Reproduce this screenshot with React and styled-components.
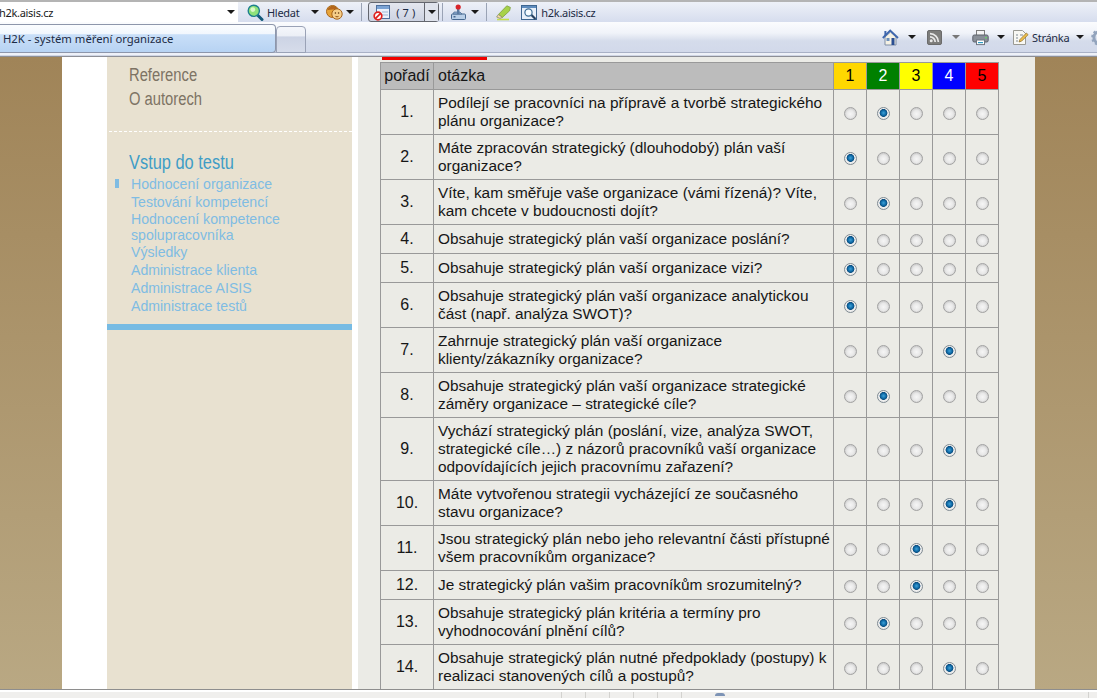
import React from "react";
import styled, { createGlobalStyle } from "styled-components";

const Global = createGlobalStyle`
  html, body { margin: 0; padding: 0; height: 100%; overflow: hidden; background: #fff; }
  #root { height: 100%; }
  * { box-sizing: border-box; }
`;

const Chrome = styled.div`
  width: 1097px;
  height: 698px;
  display: flex;
  flex-direction: column;
  overflow: hidden;
  font-family: "Liberation Sans", Arial, sans-serif;
`;

/* ---------- browser toolbar ---------- */
const CommandBar = styled.div`
  flex: 0 0 22px;
  display: flex;
  align-items: center;
  border-top: 2px solid #b4b4b4;
  background: linear-gradient(#eef1f8, #d6ddee);
  font: 11px "Noto Sans", Tahoma, sans-serif;
  letter-spacing: -0.3px;
  color: #1c2b45;
  white-space: nowrap;
`;
const AddressBox = styled.div`
  width: 238px;
  height: 20px;
  flex: none;
  display: flex;
  align-items: center;
  justify-content: space-between;
  padding: 0 3px 0 0;
  background: #fff;
  overflow: hidden;
  color: #1a1a1a;
`;
const AddressText = styled.span`
  margin-left: -1px;
`;
const Tool = styled.span`
  display: inline-flex;
  align-items: center;
  flex: none;
  margin-left: ${(p) => p.$ml || 0}px;
`;
const Caret = styled.span`
  flex: none;
  width: 0;
  height: 0;
  margin-left: ${(p) => p.$ml || 0}px;
  border-left: 4px solid transparent;
  border-right: 4px solid transparent;
  border-top: 4px solid ${(p) => (p.$muted ? "#777" : "#1a1a1a")};
`;
const Sep = styled.span`
  flex: none;
  width: 1px;
  height: 18px;
  background: #9aa3b5;
  margin-left: ${(p) => p.$ml || 0}px;
`;
const BlockerButton = styled.span`
  flex: none;
  width: 71px;
  height: 20px;
  margin-left: 6px;
  display: flex;
  align-items: center;
  border: 1px solid #63666e;
  border-radius: 3px;
  background: linear-gradient(#e4e7ef, #cdd3e2);
`;
const BlockerMain = styled.span`
  display: flex;
  align-items: center;
  flex: 1;
  height: 100%;
  padding-left: 4px;
  gap: 6px;
  letter-spacing: 3px;
`;
const BlockerSplit = styled.span`
  width: 14px;
  height: 100%;
  display: flex;
  align-items: center;
  justify-content: center;
  border-left: 1px solid #63666e;
  background: #dfe3ec;
`;

/* ---------- tab row ---------- */
const TabRow = styled.div`
  flex: 0 0 35px;
  display: flex;
  align-items: flex-end;
  background: linear-gradient(
    #fbfcfe 0,
    #f0f3f9 11px,
    #d5dceb 19px,
    #d2d9ea 30px,
    #a9b1c6 30px,
    #a9b1c6 31px,
    #eef1f8 31px,
    #eef1f8 33px,
    #cfd5e4 33px,
    #cfd5e4 34px,
    #8d8f96 34px
  );
  font: 11px "Noto Sans", Tahoma, sans-serif;
  letter-spacing: -0.3px;
  color: #1c2b45;
  white-space: nowrap;
  position: relative;
  padding-bottom: 4px;
`;
const ActiveTab = styled.div`
  width: 277px;
  height: 29px;
  flex: none;
  margin-left: -1px;
  padding: 2px 0 0 4px;
  font-size: 11.3px;
  letter-spacing: 0;
  line-height: 24px;
  border: 1px solid #8d96ab;
  border-left: 0;
  border-radius: 0 4px 4px 0;
  background: linear-gradient(#fbfdff 0, #f2f7fd 32%, #c9dff8 36%, #b7d3f3 100%);
`;
const EmptyTab = styled.div`
  width: 30px;
  height: 27px;
  flex: none;
  border: 1px solid #9aa2b6;
  border-radius: 4px 4px 0 0;
  background: linear-gradient(#f5f7fb 0, #eceff6 35%, #ccd3e4 40%, #d6dcea 100%);
`;
const PageTools = styled.div`
  position: absolute;
  left: 882px;
  top: 4px;
  width: 215px;
  height: 22px;
  display: flex;
  align-items: center;
  overflow: hidden;
`;

/* ---------- web page ---------- */
const Viewport = styled.div`
  flex: 1;
  min-height: 0;
  display: flex;
  justify-content: center;
  overflow: hidden;
  background: linear-gradient(#a08458, #b9a883);
`;
const Sheet = styled.div`
  width: 973px;
  flex: none;
  display: flex;
  background: #fff;
  padding-left: 45px;
`;
const Sidebar = styled.aside`
  width: 245px;
  flex: none;
  padding-top: 6px;
  background: #e8e1d0;
`;
const TopLink = styled.div`
  padding-left: 22px;
  height: 24px;
  font-size: 18px;
  line-height: 24px;
  color: #7d7364;
`;
const Condensed = styled.span`
  display: inline-block;
  transform: scaleX(0.82);
  transform-origin: left center;
  white-space: nowrap;
`;
const Dashed = styled.div`
  margin: 20px 0 18px 2px;
  border-top: 1px dashed #fff;
`;
const SideTitle = styled.h2`
  margin: 0 0 1px;
  padding-left: 22px;
  font-size: 20px;
  font-weight: 400;
  line-height: 24px;
  color: #3f9dc6;
`;
const Menu = styled.ul`
  list-style: none;
  margin: 0;
  padding: 0 60px 0 24px;
`;
const MenuItem = styled.li`
  position: relative;
  display: flex;
  align-items: center;
  min-height: 18px;
  font-size: 14.1px;
  line-height: 16px;
  color: #7fbce3;
  ${(p) =>
    p.$current &&
    `&::before {
      content: "";
      position: absolute;
      left: -16px;
      top: 4px;
      width: 4px;
      height: 9px;
      background: #7fbce3;
    }`}
`;
const SideRule = styled.div`
  height: 6px;
  margin-top: 9px;
  background: #77bbe3;
`;
const Main = styled.main`
  width: 677px;
  flex: none;
  margin-left: 6px;
  padding: 0 0 0 22px;
  background: #ebebe6;
`;
const TabMarker = styled.div`
  width: 105px;
  height: 3px;
  margin-left: 2px;
  background: #f00000;
`;
const Table = styled.table`
  width: 619px;
  margin-top: 2px;
  table-layout: fixed;
  border-collapse: collapse;
  font-size: 15.4px;
  line-height: 18px;
  color: #161616;
  & td, & th {
    border: 1px solid #999;
    padding: 0;
  }
`;
const HeadRow = styled.tr`
  height: 27px;
`;
const HeadCell = styled.th`
  background: #bcbcbc;
  font-size: 16px;
  font-weight: 400;
  text-align: ${(p) => (p.$left ? "left" : "center")};
  padding-left: ${(p) => (p.$left ? 4 : 0)}px !important;
`;
const ScoreHead = styled.th`
  background: ${(p) => p.$bg};
  color: ${(p) => p.$fg};
  font-size: 16px;
  font-weight: 400;
`;
const Row = styled.tr`
  height: ${(p) => p.$h}px;
`;
const OrderCell = styled.td`
  text-align: center;
  font-size: 16px;
`;
const Question = styled.td`
  padding: 0 1px 0 4px !important;
`;
const RadioCell = styled.td`
  text-align: center;
  line-height: 0;
`;
const Radio = styled.input.attrs({ type: "radio" })`
  appearance: none;
  width: 13px;
  height: 13px;
  margin: 3px 0 0;
  border-radius: 50%;
  border: 1px solid #a3a3a3;
  background: radial-gradient(circle at 50% 55%, #f6f6f6 0, #e8e8e8 45%, #cfcfcf 70%, #f2f2f2 100%);
  &:checked {
    border-color: #7f8a92;
    background: radial-gradient(circle at 50% 45%, #3fa2d8 0, #0f6ba8 30%, #0d4f80 44%, #f0f0f0 52%, #e2e2e2 100%);
  }
`;

/* ---------- status bar ---------- */
const StatusBar = styled.div`
  flex: 0 0 8px;
  display: flex;
  border-top: 2px solid #fff;
  box-shadow: 0 -1px 0 #8e8e8e;
  background: #f0efed;
  position: relative;
  z-index: 1;
`;
const StatusFiller = styled.div`
  width: 561px;
  flex: none;
`;
const StatusCell = styled.div`
  width: 24px;
  flex: none;
  border-left: 1px solid #d3d2cf;
`;
const StatusIcon = styled.div`
  width: 10px;
  height: 3px;
  margin: 1px 0 0 10px;
  flex: none;
  border-radius: 5px 5px 0 0;
  background: #7d93b5;
`;
const StatusEnd = styled.div`
  margin-left: auto;
  width: 9px;
  flex: none;
  border-left: 1px solid #d3d2cf;
`;

/* ---------- icons ---------- */
const Svg = ({ w = 17, h = 17, vb = "0 0 17 17", children }) => (
  <svg width={w} height={h} viewBox={vb} style={{ display: "block", flex: "none" }}>
    {children}
  </svg>
);

const SearchIcon = () => (
  <Svg>
    <path d="M10 10.5l5 5" stroke="#145a7a" strokeWidth="3" strokeLinecap="round" />
    <circle cx="6.8" cy="6.8" r="5.6" fill="#8fe27a" stroke="#1d7f8e" strokeWidth="1.4" />
    <circle cx="5.8" cy="5.6" r="2.4" fill="#dcf8c8" />
  </Svg>
);
const FacesIcon = () => (
  <Svg vb="0 0 17 17">
    <circle cx="6.5" cy="7.5" r="6" fill="#e8a53a" stroke="#a8641a" />
    <path d="M2 6c1-4 7-5 9-1" fill="#b8661c" stroke="#a8641a" />
    <circle cx="11" cy="10" r="5.2" fill="#f6cf8a" stroke="#a8641a" />
    <circle cx="9.4" cy="9" r=".8" fill="#5a3208" />
    <circle cx="12.6" cy="9" r=".8" fill="#5a3208" />
    <path d="M9.5 12.4q1.6 1 3 0" stroke="#8a4c10" fill="none" />
  </Svg>
);
const BlockerIcon = () => (
  <Svg>
    <rect x="3.5" y="1.5" width="13" height="13" fill="#eaf1fb" stroke="#4d6f9c" />
    <rect x="4" y="2" width="12" height="3" fill="#7ba3d4" />
    <path d="M9 8h6M9 11h6" stroke="#9fb7d6" />
    <circle cx="5" cy="12" r="3.8" fill="#fff" stroke="#e0201c" strokeWidth="1.7" />
    <path d="M2.6 14.3l4.8-4.6" stroke="#e0201c" strokeWidth="1.7" />
  </Svg>
);
const JoystickIcon = () => (
  <Svg>
    <rect x="1.5" y="10" width="14" height="5.5" rx="1" fill="#b9cfe8" stroke="#47688f" />
    <path d="M4 8h6l2 2H3z" fill="#8eaed2" stroke="#47688f" strokeWidth=".7" />
    <rect x="7" y="4" width="2.4" height="6" fill="#5a7aa0" />
    <circle cx="8.2" cy="3" r="2.6" fill="#d9252a" />
    <rect x="3.5" y="12" width="2" height="1.5" fill="#47688f" />
  </Svg>
);
const EraserIcon = () => (
  <Svg>
    <path d="M2 15.5h12" stroke="#c5e04a" strokeWidth="1.6" />
    <path d="M3.4 10.5L11.8 1.8l3.6 1.6-.8 3.4L7.4 13.4z" fill="#a7d24a" stroke="#7e9f3d" strokeWidth=".8" />
    <path d="M3.4 10.5L7.4 13.4 5 14.4 1.6 13z" fill="#f5dca8" stroke="#8c8c6c" strokeWidth=".8" />
  </Svg>
);
const WindowSearchIcon = () => (
  <Svg>
    <rect x=".5" y="1.5" width="15" height="14" fill="#e8f0fa" stroke="#3e6690" />
    <rect x="1" y="2" width="14" height="2" fill="#5f8dbf" />
    <path d="M9.5 10l5 5" stroke="#26415f" strokeWidth="2.2" />
    <circle cx="7.5" cy="8.5" r="3.6" fill="#f5fbff" stroke="#3d6d95" strokeWidth="1.2" />
  </Svg>
);
const HomeIcon = () => (
  <Svg>
    <path d="M3 8v8h11V8L8.5 3z" fill="#f5f1e4" stroke="#7e8ea6" />
    <path d="M.8 9L8.2 1.6 16 9" fill="none" stroke="#3f67ad" strokeWidth="1.8" />
    <path d="M2.4 2h2v3.5l-2 1.8z" fill="#3f67ad" />
    <rect x="9.5" y="9" width="3" height="7" fill="#2b4f92" />
    <rect x="4.5" y="9" width="3" height="3" fill="#6d90bd" />
  </Svg>
);
const RssIcon = () => (
  <Svg w={15} h={15} vb="0 0 15 15">
    <rect x=".5" y=".5" width="14" height="14" rx="1.5" fill="#7d7d7b" stroke="#6b6b6b" />
    <circle cx="4.2" cy="10.8" r="1.5" fill="#e9e9e9" />
    <path d="M3 6.8a5.2 5.2 0 015.2 5.2M3 3.6A8.4 8.4 0 0111.4 12" fill="none" stroke="#e9e9e9" strokeWidth="1.7" />
  </Svg>
);
const PrinterIcon = () => (
  <Svg>
    <rect x="4.5" y="1.5" width="8" height="5" fill="#f4f4f4" stroke="#7c7c7c" />
    <rect x=".8" y="6" width="15.4" height="7" rx="1.5" fill="#8a9099" stroke="#5c626b" />
    <rect x="4.5" y="11" width="8" height="4.6" fill="#fff" stroke="#6f7680" />
    <rect x="6" y="13" width="5" height="1.2" fill="#2d9bc4" />
    <rect x="13" y="8" width="2" height="1.3" fill="#6bd06b" />
  </Svg>
);
const PageIcon = () => (
  <Svg>
    <path d="M1.5 1.5h9l3 3v11h-12z" fill="#f8f8f4" stroke="#9a9a94" />
    <path d="M4 6h2M4 9h2M4 12h2M8 6h3" stroke="#7c8894" />
    <path d="M7 13l1-2.6 6.4-6.4 1.7 1.7-6.4 6.4z" fill="#edbd4a" stroke="#8a6a2a" strokeWidth=".7" />
  </Svg>
);
const GearIcon = () => (
  <Svg>
    <circle cx="8.5" cy="8.5" r="5.6" fill="none" stroke="#93a4bd" strokeWidth="3" />
    <circle cx="8.5" cy="8.5" r="7.3" fill="none" stroke="#93a4bd" strokeWidth="2" strokeDasharray="2.4 2.2" />
  </Svg>
);

/* ---------- data ---------- */
const menu = [
  "Hodnocení organizace",
  "Testování kompetencí",
  "Hodnocení kompetence spolupracovníka",
  "Výsledky",
  "Administrace klienta",
  "Administrace AISIS",
  "Administrace testů",
];
const scores = [
  { n: 1, bg: "#ffd700", fg: "#000" },
  { n: 2, bg: "#008000", fg: "#fff" },
  { n: 3, bg: "#ffff00", fg: "#000" },
  { n: 4, bg: "#0000ff", fg: "#fff" },
  { n: 5, bg: "#ff0000", fg: "#000" },
];
const rows = [
  ["Podílejí se pracovníci na přípravě a tvorbě strategického plánu organizace?", 2, 45],
  ["Máte zpracován strategický (dlouhodobý) plán vaší organizace?", 1, 45],
  ["Víte, kam směřuje vaše organizace (vámi řízená)? Víte, kam chcete v budoucnosti dojít?", 2, 45],
  ["Obsahuje strategický plán vaší organizace poslání?", 1, 29],
  ["Obsahuje strategický plán vaší organizace vizi?", 1, 29],
  ["Obsahuje strategický plán vaší organizace analytickou část (např. analýza SWOT)?", 1, 45],
  ["Zahrnuje strategický plán vaší organizace klienty/zákazníky organizace?", 4, 45],
  ["Obsahuje strategický plán vaší organizace strategické záměry organizace – strategické cíle?", 2, 45],
  ["Vychází strategický plán (poslání, vize, analýza SWOT, strategické cíle…) z názorů pracovníků vaší organizace odpovídajících jejich pracovnímu zařazení?", 4, 63],
  ["Máte vytvořenou strategii vycházející ze současného stavu organizace?", 4, 45],
  ["Jsou strategický plán nebo jeho relevantní části přístupné všem pracovníkům organizace?", 3, 45],
  ["Je strategický plán vašim pracovníkům srozumitelný?", 3, 29],
  ["Obsahuje strategický plán kritéria a termíny pro vyhodnocování plnění cílů?", 2, 45],
  ["Obsahuje strategický plán nutné předpoklady (postupy) k realizaci stanovených cílů a postupů?", 4, 45],
];

export default function App() {
  return (
    <Chrome>
      <Global />
      <CommandBar>
        <AddressBox>
          <AddressText>h2k.aisis.cz</AddressText>
          <Caret />
        </AddressBox>
        <Tool $ml={9}><SearchIcon /></Tool>
        <Tool $ml={3}>Hledat</Tool>
        <Caret $ml={12} />
        <Tool $ml={7}><FacesIcon /></Tool>
        <Caret $ml={3} />
        <Sep $ml={7} />
        <BlockerButton>
          <BlockerMain><BlockerIcon />(7)</BlockerMain>
          <BlockerSplit><Caret /></BlockerSplit>
        </BlockerButton>
        <Sep $ml={3} />
        <Tool $ml={7}><JoystickIcon /></Tool>
        <Caret $ml={4} />
        <Sep $ml={7} />
        <Tool $ml={8}><EraserIcon /></Tool>
        <Tool $ml={9}><WindowSearchIcon /></Tool>
        <Tool $ml={3}>h2k.aisis.cz</Tool>
      </CommandBar>
      <TabRow>
        <ActiveTab>H2K - systém měření organizace</ActiveTab>
        <EmptyTab />
        <PageTools>
          <HomeIcon />
          <Caret $ml={9} />
          <Tool $ml={11}><RssIcon /></Tool>
          <Caret $ml={10} $muted />
          <Tool $ml={12}><PrinterIcon /></Tool>
          <Caret $ml={8} />
          <Tool $ml={7}><PageIcon /></Tool>
          <Tool $ml={3}>Stránka</Tool>
          <Caret $ml={7} />
          <Tool $ml={7}><GearIcon /></Tool>
        </PageTools>
      </TabRow>
      <Viewport>
        <Sheet>
          <Sidebar>
            <TopLink><Condensed>Reference</Condensed></TopLink>
            <TopLink><Condensed>O autorech</Condensed></TopLink>
            <Dashed />
            <SideTitle><Condensed>Vstup do testu</Condensed></SideTitle>
            <Menu>
              {menu.map((m, i) => (
                <MenuItem key={m} $current={i === 0}>{m}</MenuItem>
              ))}
            </Menu>
            <SideRule />
          </Sidebar>
          <Main>
            <TabMarker />
            <Table>
              <colgroup>
                <col style={{ width: 53 }} />
                <col style={{ width: 400 }} />
                <col style={{ width: 33 }} />
                <col style={{ width: 33 }} />
                <col style={{ width: 33 }} />
                <col style={{ width: 33 }} />
                <col style={{ width: 33 }} />
              </colgroup>
              <thead>
                <HeadRow>
                  <HeadCell>pořadí</HeadCell>
                  <HeadCell $left>otázka</HeadCell>
                  {scores.map((s) => (
                    <ScoreHead key={s.n} $bg={s.bg} $fg={s.fg}>{s.n}</ScoreHead>
                  ))}
                </HeadRow>
              </thead>
              <tbody>
                {rows.map(([q, a, h], i) => (
                  <Row key={i} $h={h}>
                    <OrderCell>{i + 1}.</OrderCell>
                    <Question>{q}</Question>
                    {scores.map((s) => (
                      <RadioCell key={s.n}>
                        <Radio name={`q${i}`} defaultChecked={s.n === a} aria-label={`${i + 1}: ${s.n}`} />
                      </RadioCell>
                    ))}
                  </Row>
                ))}
              </tbody>
            </Table>
          </Main>
        </Sheet>
      </Viewport>
      <StatusBar>
        <StatusFiller />
        {[0, 1, 2, 3, 4, 5].map((i) => <StatusCell key={i} />)}
        <StatusIcon />
        <StatusEnd />
      </StatusBar>
    </Chrome>
  );
}
